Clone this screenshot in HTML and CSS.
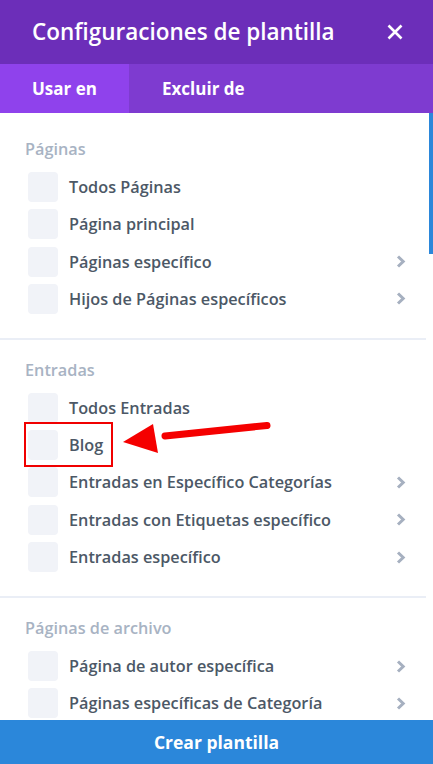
FILE: index.html
```html
<!DOCTYPE html>
<html lang="es">
<head>
<meta charset="utf-8">
<title>Configuraciones de plantilla</title>
<link rel="stylesheet" href="styles.css">
</head>
<body>
<div class="modal">
  <header class="header">
    <h1 class="title">Configuraciones de plantilla</h1>
    <svg class="close" width="16" height="16" viewBox="0 0 16 16"><path d="M1.5 1.5L14.5 14.5M14.5 1.5L1.5 14.5" stroke="#fff" stroke-width="2.6" stroke-linecap="butt"/></svg>
  </header>
  <nav class="tabs">
    <div class="tab tab-active">Usar en</div>
    <div class="tab">Excluir de</div>
  </nav>
  <main class="content">
    <div class="scroll-area">
      <section class="group group-first">
        <h2 class="group-title">Páginas</h2>
        <ul class="list">
          <li class="row"><span class="check"></span><span class="label">Todos Páginas</span></li>
          <li class="row"><span class="check"></span><span class="label">Página principal</span></li>
          <li class="row"><span class="check"></span><span class="label">Páginas específico</span><svg class="chev" viewBox="0 0 10 13"><path d="M2 1.5l5.2 5-5.2 5" fill="none" stroke="#a6b0c0" stroke-width="3"/></svg></li>
          <li class="row"><span class="check"></span><span class="label">Hijos de Páginas específicos</span><svg class="chev" viewBox="0 0 10 13"><path d="M2 1.5l5.2 5-5.2 5" fill="none" stroke="#a6b0c0" stroke-width="3"/></svg></li>
        </ul>
      </section>
      <section class="group">
        <h2 class="group-title">Entradas</h2>
        <ul class="list">
          <li class="row"><span class="check"></span><span class="label">Todos Entradas</span></li>
          <li class="row"><span class="check"></span><span class="label">Blog</span></li>
          <li class="row"><span class="check"></span><span class="label">Entradas en Específico Categorías</span><svg class="chev" viewBox="0 0 10 13"><path d="M2 1.5l5.2 5-5.2 5" fill="none" stroke="#a6b0c0" stroke-width="3"/></svg></li>
          <li class="row"><span class="check"></span><span class="label">Entradas con Etiquetas específico</span><svg class="chev" viewBox="0 0 10 13"><path d="M2 1.5l5.2 5-5.2 5" fill="none" stroke="#a6b0c0" stroke-width="3"/></svg></li>
          <li class="row"><span class="check"></span><span class="label">Entradas específico</span><svg class="chev" viewBox="0 0 10 13"><path d="M2 1.5l5.2 5-5.2 5" fill="none" stroke="#a6b0c0" stroke-width="3"/></svg></li>
        </ul>
      </section>
      <section class="group">
        <h2 class="group-title">Páginas de archivo</h2>
        <ul class="list">
          <li class="row"><span class="check"></span><span class="label">Página de autor específica</span><svg class="chev" viewBox="0 0 10 13"><path d="M2 1.5l5.2 5-5.2 5" fill="none" stroke="#a6b0c0" stroke-width="3"/></svg></li>
          <li class="row"><span class="check"></span><span class="label">Páginas específicas de Categoría</span><svg class="chev" viewBox="0 0 10 13"><path d="M2 1.5l5.2 5-5.2 5" fill="none" stroke="#a6b0c0" stroke-width="3"/></svg></li>
        </ul>
      </section>
    </div>
    <div class="scrollbar"></div>
    <div class="highlight"></div>
    <svg class="arrow" width="160" height="50" viewBox="0 0 160 50"><path d="M147 15.5L45 26" stroke="#f50000" stroke-width="7" stroke-linecap="round"/><polygon points="3,32 33,14 38,43" fill="#f50000"/></svg>
  </main>
  <footer class="footer">
    <button class="create">Crear plantilla</button>
  </footer>
</div>
</body>
</html>
```
FILE: styles.css
```css
* { box-sizing: border-box; }
html, body { margin: 0; padding: 0; }
body {
  font-family: "Open Sans", "Liberation Sans", sans-serif;
  background: #fff;
  width: 433px;
  height: 764px;
  overflow: hidden;
}
.modal {
  display: flex;
  flex-direction: column;
  height: 764px;
}
.header {
  height: 64px;
  flex: none;
  background: #6c2eb9;
  display: flex;
  align-items: center;
  justify-content: space-between;
  padding: 0 30px 0 32px;
}
.title {
  margin: 0;
  color: #fff;
  font-size: 22.5px;
  font-weight: 600;
  line-height: 30px;
}
.close { display: block; }
.tabs {
  height: 49px;
  flex: none;
  display: flex;
  background: #7e3bd0;
}
.tab {
  color: #fff;
  font-size: 17px;
  font-weight: 700;
  line-height: 49px;
  padding: 0 33px;
  white-space: nowrap;
}
.tab-active {
  background: #8f42ec;
  width: 129px;
  flex: none;
  padding: 0 0 0 32px;
}
.content {
  flex: 1;
  position: relative;
  overflow: hidden;
}
.scroll-area { width: 426px; }
.group {
  padding: 19px 0 24px;
  border-bottom: 2px solid #eaeef6;
}
.group-first { padding-top: 25px; }
.group-title {
  margin: 0 0 12px;
  padding-left: 25px;
  font-size: 16.25px;
  line-height: 22px;
  font-weight: 600;
  color: #a8b3c3;
}
.list {
  list-style: none;
  margin: 0;
  padding: 0 20px 0 28px;
  display: flex;
  flex-direction: column;
  gap: 7.3px;
}
.row {
  display: flex;
  align-items: center;
  height: 30px;
}
.check {
  width: 30px;
  height: 30px;
  border-radius: 4px;
  background: #f1f3f8;
  flex: none;
}
.label {
  flex: 1;
  margin-left: 11px;
  font-size: 16.25px;
  font-weight: 600;
  color: #4c5866;
  line-height: 30px;
  white-space: nowrap;
}
.chev { width: 10px; height: 13px; flex: none; }
.scrollbar {
  position: absolute;
  right: 0;
  top: 0;
  width: 4px;
  height: 141px;
  background: #2b87da;
}
.highlight {
  position: absolute;
  left: 24px;
  top: 309px;
  width: 89px;
  height: 45px;
  border: 2px solid #f00000;
}
.arrow {
  position: absolute;
  left: 120px;
  top: 297px;
}
.footer { flex: none; }
.create {
  display: block;
  width: 100%;
  height: 44px;
  border: 0;
  margin: 0;
  background: #2b87da;
  color: #fff;
  font-family: "Open Sans", "Liberation Sans", sans-serif;
  font-size: 17.5px;
  font-weight: 700;
}
```
